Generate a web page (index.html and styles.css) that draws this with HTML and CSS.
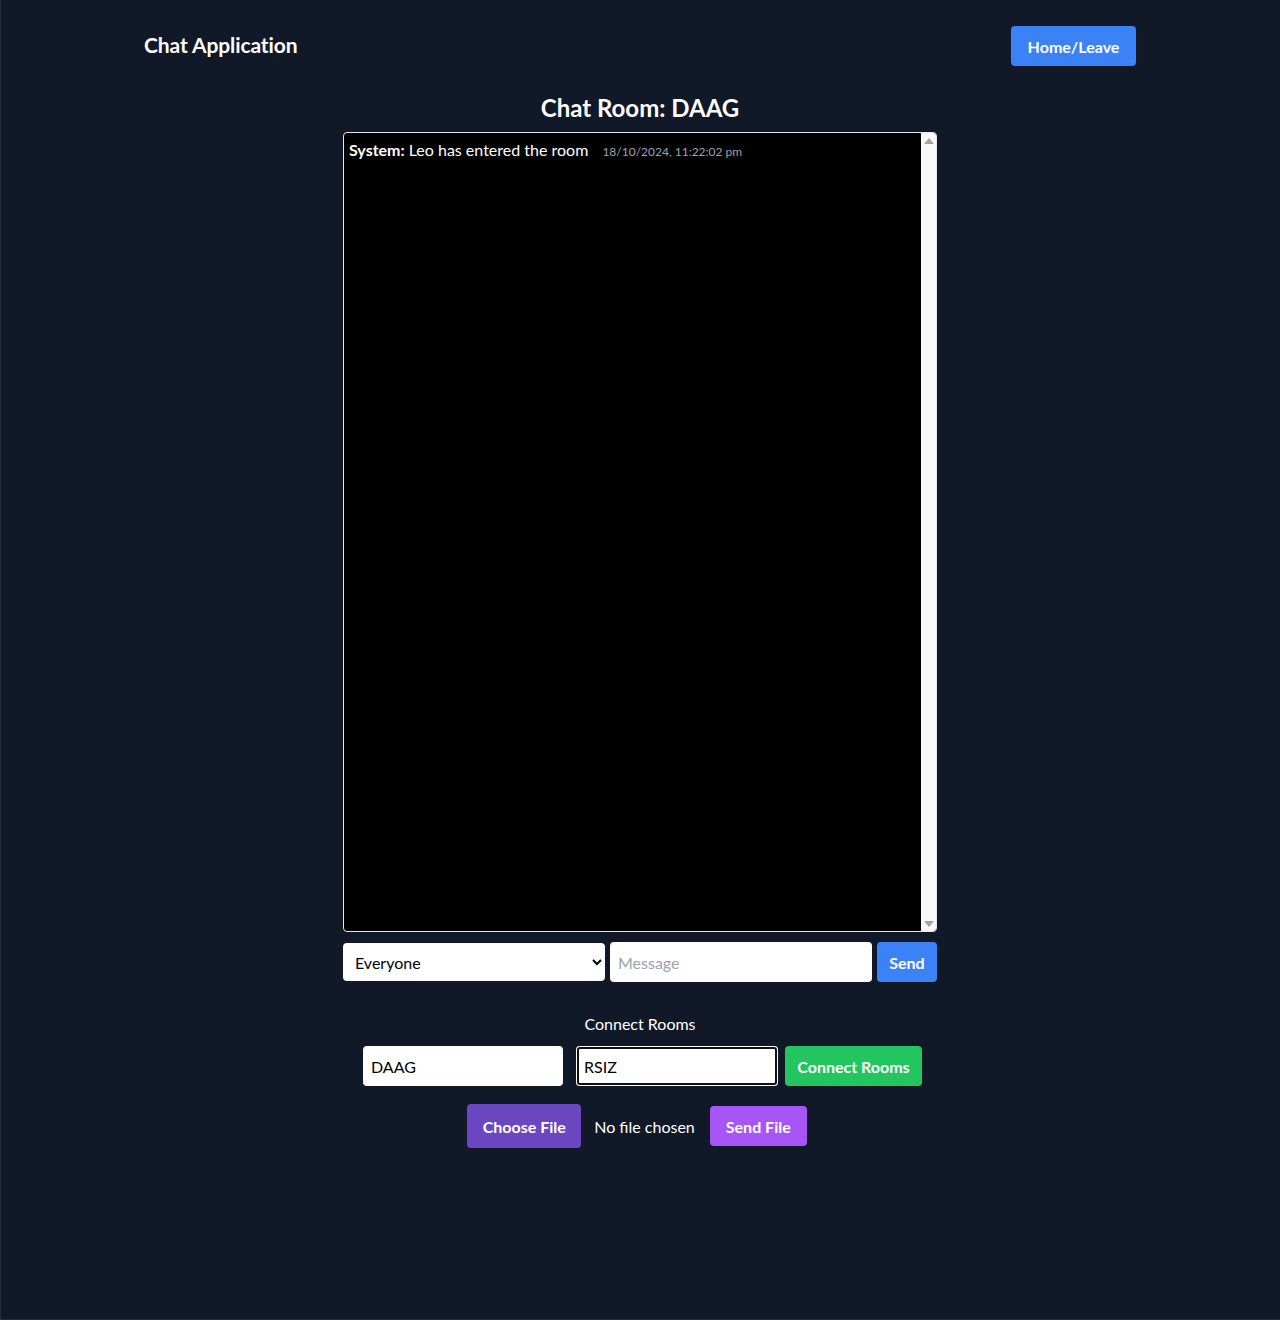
FILE: index.html
```html
<!DOCTYPE html>
<html lang="en">
<head>
<meta charset="utf-8">
<title>Chat Application</title>
<link rel="stylesheet" href="styles.css">
</head>
<body>
<div class="page">
  <header class="header">
    <h1 class="brand">Chat Application</h1>
    <button class="btn btn-blue btn-home">Home/Leave</button>
  </header>

  <main class="main">
    <h2 class="room-title">Chat Room: DAAG</h2>

    <div class="chat-box">
      <div class="messages">
        <div class="message">
          <span class="sender">System:</span> Leo has entered the room
          <span class="time">18/10/2024, 11:22:02 pm</span>
        </div>
      </div>
      <div class="scrollbar">
        <span class="arrow arrow-up"></span>
        <span class="arrow arrow-down"></span>
      </div>
    </div>

    <div class="send-row">
      <select class="select">
        <option>Everyone</option>
      </select>
      <input class="input msg-input" type="text" placeholder="Message">
      <button class="btn btn-blue btn-send">Send</button>
    </div>

    <div class="connect">
      <div class="connect-label">Connect Rooms</div>
      <div class="connect-row">
        <input class="input room-input room-a" type="text" value="DAAG">
        <input class="input room-input room-b focused" type="text" value="RSIZ">
        <button class="btn btn-green">Connect Rooms</button>
      </div>
    </div>

    <div class="file-row">
      <span class="btn btn-choose">Choose File</span>
      <span class="file-name">No file chosen</span>
      <button class="btn btn-purple">Send File</button>
    </div>
  </main>
</div>
</body>
</html>
```

FILE: styles.css
```css
* {
  box-sizing: border-box;
}

html, body {
  margin: 0;
  padding: 0;
}

body {
  background: #111827;
  color: #ffffff;
  font-family: "Lato", "Inter", "Liberation Sans", sans-serif;
  min-height: 1320px;
  box-shadow: inset 1px 0 0 #262d3b, inset 0 -1px 0 #262d3b;
}

.page {
  width: 992px;
  margin: 0 auto;
  padding-top: 26px;
}

.header {
  display: flex;
  justify-content: space-between;
  align-items: center;
  height: 40px;
}

.brand {
  margin: 0 0 2px;
  font-size: 21px;
  line-height: 24px;
  font-weight: 700;
  letter-spacing: -0.1px;
}

.btn {
  border: none;
  border-radius: 4px;
  color: #fff;
  font-family: inherit;
  font-weight: 700;
  font-size: 16px;
  cursor: pointer;
  display: inline-flex;
  align-items: center;
  justify-content: center;
}

.btn-blue {
  background: #3b82f6;
}

.btn-home {
  width: 125px;
  height: 40px;
}

.main {
  display: flex;
  flex-direction: column;
  align-items: center;
}

.room-title {
  margin: 26px 0 8px;
  font-size: 24px;
  line-height: 32px;
  font-weight: 700;
}

.chat-box {
  width: 594px;
  height: 800px;
  background: #000;
  border: 1px solid #e5e7eb;
  border-radius: 4px;
  display: flex;
  overflow: hidden;
}

.messages {
  flex: 1;
  padding: 5px;
}

.scrollbar {
  width: 15px;
  background: #f8f8f8;
  display: flex;
  flex-direction: column;
  justify-content: space-between;
  align-items: center;
  padding: 5px 0 4px;
}

.arrow {
  width: 0;
  height: 0;
  border-left: 5px solid transparent;
  border-right: 5px solid transparent;
}

.arrow-up {
  border-bottom: 6px solid #a3a3a3;
}

.arrow-down {
  border-top: 6px solid #a3a3a3;
}

.message {
  font-size: 16px;
  line-height: 24px;
}

.sender {
  font-weight: 700;
}

.time {
  font-size: 12px;
  color: #9ca3af;
  margin-left: 10px;
}

.send-row {
  display: flex;
  gap: 5px;
  width: 594px;
  margin-top: 10px;
  align-items: center;
}

.select {
  width: 262px;
  height: 38px;
  border: none;
  border-radius: 4px;
  background: #fff;
  color: #000;
  font-family: inherit;
  font-size: 16px;
  padding: 0 8px;
}

.input {
  height: 40px;
  border: none;
  border-radius: 4px;
  background: #fff;
  color: #000;
  font-family: inherit;
  font-size: 16px;
  padding: 0 8px;
  outline: none;
}

.msg-input {
  width: 262px;
}

.msg-input::placeholder {
  color: #9ca3af;
}

.btn-send {
  width: 60px;
  height: 40px;
}

.connect {
  margin-top: 32px;
  display: flex;
  flex-direction: column;
  align-items: center;
}

.connect-label {
  font-size: 16px;
  line-height: 20px;
}

.connect-row {
  display: flex;
  margin-top: 12px;
  padding-left: 5px;
}

.room-input {
  width: 200px;
}

.room-a {
  margin-right: 13px;
}

.room-b {
  width: 202px;
  margin-right: 7px;
}

.focused {
  box-shadow: inset 0 0 0 1px #fff, inset 0 0 0 3px #111;
}

.btn-green {
  background: #22c55e;
  width: 137px;
  height: 40px;
}

.file-row {
  display: flex;
  align-items: center;
  margin-top: 18px;
  margin-right: 6px;
}

.btn-choose {
  background: #6b46c1;
  width: 114px;
  height: 44px;
}

.file-name {
  font-size: 16px;
  margin: 0 15px 0 13px;
}

.btn-purple {
  background: #a855f7;
  width: 97px;
  height: 40px;
}
```
